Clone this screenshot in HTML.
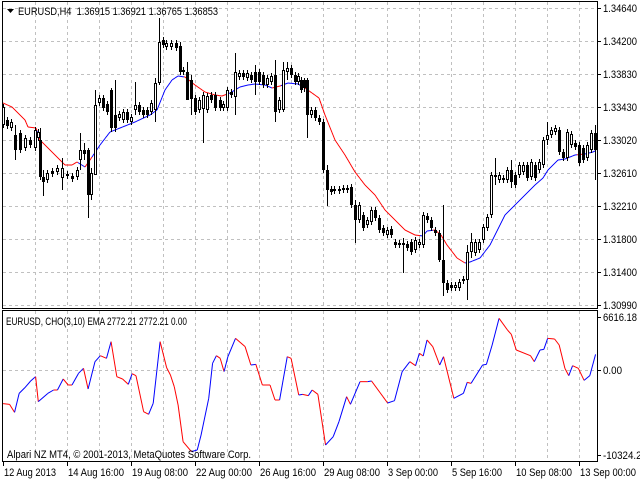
<!DOCTYPE html>
<html><head><meta charset="utf-8"><style>
html,body{margin:0;padding:0;background:#fff;width:640px;height:480px;overflow:hidden}
svg{display:block}
text{font-family:"Liberation Sans",sans-serif;font-size:11px;fill:#000}
</style></head><body>
<svg id="s" width="640" height="480" xmlns="http://www.w3.org/2000/svg">
<rect x="0" y="0" width="640" height="480" fill="#fff"/>
<g id="grid" stroke="#c0c0c0" stroke-dasharray="3,3" stroke-width="1"></g>
<g id="ma" fill="none" stroke-width="1"></g>
<g id="candles"></g>
<g id="ind" fill="none" stroke-width="1"></g>
<rect x="2.5" y="1.5" width="595" height="307" fill="none" stroke="#000"/>
<rect x="2.5" y="310.5" width="595" height="151" fill="none" stroke="#000"/>
<g id="labels"></g>
<polygon points="7,9 14,9 10.5,13" fill="#000"/>
<text x="18" y="15" textLength="200" lengthAdjust="spacingAndGlyphs">EURUSD,H4&#160;&#160;1.36915 1.36921 1.36765 1.36853</text>
<text x="6" y="325" textLength="181" lengthAdjust="spacingAndGlyphs">EURUSD, CHO(3,10) EMA 2772.21 2772.21 0.00</text>
<text x="7" y="458" textLength="244" lengthAdjust="spacingAndGlyphs">Alpari NZ MT4, © 2001-2013, MetaQuotes Software Corp.</text>
</svg>
<script>
var NS="http://www.w3.org/2000/svg";
function el(p,t,a){var e=document.createElementNS(NS,t);for(var k in a)e.setAttribute(k,a[k]);p.appendChild(e);return e;}
var grid=document.getElementById('grid');
var gx=[35,67,99,131,163,195,227,259,291,323,355,387,419,451,483,515,547,579];
gx.forEach(function(x){el(grid,'line',{x1:x+.5,y1:2,x2:x+.5,y2:308});el(grid,'line',{x1:x+.5,y1:311,x2:x+.5,y2:461});});
var gy=[8,41,74,107,140,173,206,239,272,305];
gy.forEach(function(y){el(grid,'line',{x1:3,y1:y+.5,x2:597,y2:y+.5});});
el(grid,'line',{x1:3,y1:370.5,x2:597,y2:370.5});
var lab=document.getElementById('labels');
function txt(x,y,s,w){var a={x:x,y:y};if(w){a.textLength=w;a.lengthAdjust='spacingAndGlyphs';}var t=el(lab,'text',a);t.textContent=s;}
var pl=["1.34640","1.34200","1.33830","1.33430","1.33020","1.32610","1.32210","1.31800","1.31400","1.30990"];
gy.forEach(function(y,i){el(lab,'line',{x1:597,y1:y+.5,x2:601,y2:y+.5,stroke:'#000'});txt(603,y+4,pl[i],34);});
[[317,"6616.18",34],[370,"0.00",19],[455,"-10324.27",44]].forEach(function(a){el(lab,'line',{x1:597,y1:a[0]+.5,x2:601,y2:a[0]+.5,stroke:'#000'});txt(603,a[0]+4,a[1],a[2]);});
var tl=[[3,"12 Aug 2013",52],[67,"14 Aug 16:00",56],[131,"19 Aug 08:00",56],[195,"22 Aug 00:00",56],[259,"26 Aug 16:00",56],[323,"29 Aug 08:00",56],[387,"3 Sep 00:00",50],[451,"5 Sep 16:00",50],[515,"10 Sep 08:00",56],[579,"13 Sep 00:00",56]];
tl.forEach(function(a){el(lab,'line',{x1:a[0]+.5,y1:462,x2:a[0]+.5,y2:466,stroke:'#000'});txt(a[0]+1,476,a[1],a[2]);});
var C="3,107,125,w;7,120,126,b;11,122,128,w;15,135,150,b,125,160;20,133,150,b;25,138,148,w;30,140,145,b;35,130,148,w;38,132,138,w;40,140,177,b,128,180;43,177,182,b,170,196;47,173,180,w;52,171,174,b;57,168,172,w;62,168,178,w,158,190;67,174,176,b;72,176,179,b;77,170,177,w;80,150,160,w,133,170;84,150,154,b,143,160;88,150,195,b,148,218;91,173,195,w,168,200;95,105,175,w,90,175;99,98,103,w;103,98,108,b;107,104,112,b;111,90,128,b,88,132;115,115,128,b,80,132;119,114,118,w;123,112,120,w;127,112,120,b;131,117,122,w;135,105,110,w,82,115;139,105,112,b;143,110,115,b;147,110,115,b;151,103,112,w;155,83,110,w,78,122;159,42,83,w,18,85;163,40,45,b;166,43,47,w;171,43,47,w;176,43,48,b;180,46,72,b,42,75;183,70,72,b;187,72,100,b,62,100;191,80,99,b,75,115;195,98,112,b;199,100,110,w;203,95,109,w,92,143;207,96,110,w;211,95,100,b;215,95,108,b;220,100,108,b;223,104,108,w;227,90,108,w;231,92,95,b;235,72,97,w,53,115;239,73,77,w;243,73,77,b;247,73,78,w;251,75,80,b;255,72,82,b,65,95;259,72,82,b;263,75,85,b;267,78,85,w;271,76,82,w;275,75,112,b,60,122;279,100,110,w;283,70,110,w,62,112;287,68,72,w,62,80;291,68,75,b;295,75,82,b;298,76,82,w;301,80,90,b;304,80,88,b,78,92;307,80,115,b,78,138;311,110,115,w;315,110,118,b;319,118,122,b;323,122,170,b;327,170,190,b,165,206;331,189,192,b;334,189,191,b;339,189,191,w;343,188,190,b;347,188,190,w;351,187,205,b;355,205,220,b,200,243;359,205,220,w;363,215,228,b;367,220,225,w;371,210,222,w;375,210,218,b;379,218,230,b;383,228,233,b;387,230,235,w;391,229,235,b;395,242,245,b;399,243,245,b;403,243,245,b,238,273;407,244,248,b;411,242,252,b;415,240,250,w;419,242,245,w;423,215,245,w;427,216,220,b;431,220,228,b;435,230,233,b;439,233,260,b,230,262;443,260,283,b,205,296;447,283,290,b;451,285,288,b;455,285,288,w;459,282,288,w;463,279,281,b;467,252,280,w,245,300;471,242,252,w,233,258;475,242,253,w;479,242,250,w;483,227,240,w;487,217,228,w;491,175,215,w;495,175,177,b,158,185;499,175,180,w;503,178,180,w;507,170,180,w;511,170,182,b,160,188;515,175,185,b;519,165,175,w;523,165,172,w;527,165,178,b;531,162,177,w;535,165,178,b;539,162,170,w;543,140,165,w;547,135,140,w,122,145;551,130,135,w;555,128,132,w;559,130,152,b;563,152,158,b;567,132,158,w;571,134,145,w;575,143,147,b;579,145,163,b;583,148,160,b;587,145,158,w;591,133,150,w;595,133,150,b,125,180";
var cg=document.getElementById('candles');
var closes=[];
C.split(';').forEach(function(s){var a=s.split(',');var x=+a[0],t=+a[1],b=+a[2],ty=a[3];var wt=a[4]?+a[4]:t-3,wb=a[5]?+a[5]:b+3;
if(b-t<2)b=t+2;
el(cg,'line',{x1:x+.5,y1:wt,x2:x+.5,y2:t,stroke:'#000'});
el(cg,'line',{x1:x+.5,y1:b,x2:x+.5,y2:wb,stroke:'#000'});
if(ty=='b')el(cg,'rect',{x:x-1,y:t,width:3,height:b-t,fill:'#000'});
else el(cg,'rect',{x:x-0.5,y:t+.5,width:2,height:Math.max(b-t-1,1),fill:'#fff',stroke:'#000'});
closes.push([x,ty=='b'?b:t]);});
function interp(pts,x){for(var i=0;i<pts.length-1;i++){if(x>=pts[i][0]&&x<=pts[i+1][0]){var f=(x-pts[i][0])/(pts[i+1][0]-pts[i][0]);return pts[i][1]+f*(pts[i+1][1]-pts[i][1]);}}return pts[pts.length-1][1];}
var MA=[[3,103],[12,107],[25,120],[28,127],[36,128],[40,140],[55,155],[65,165],[72,165],[77,162],[85,167],[90,160],[100,145],[110,132],[120,128],[135,122],[150,115],[157,110],[165,90],[172,80],[178,76],[185,77],[195,85],[205,92],[215,95],[222,96],[230,93],[240,87],[248,85],[255,84],[265,85],[272,88],[280,86],[288,83],[298,84],[305,88],[319,98],[325,115],[335,140],[345,155],[355,172],[365,185],[375,195],[385,210],[395,220],[405,230],[415,235],[423,236],[427,231],[435,230],[441,235],[447,245],[457,258],[465,263],[470,262],[480,258],[490,245],[495,235],[505,215],[515,205],[525,195],[535,185],[543,178],[548,170],[558,160],[565,159],[575,155],[585,154],[593,152],[597,150]];
var mg=document.getElementById('ma');
for(var x=3;x<596;x+=1){var y1=interp(MA,x),y2=interp(MA,x+1);var c=interp(closes,x+.5);var col=(c>(y1+y2)/2)?'#ff0000':'#0000ff';el(mg,'line',{x1:x,y1:y1,x2:x+1,y2:y2,stroke:col});}
var I=[[8,296],[25,298],[38,322],[50,265],[65,248],[80,228],[90,218],[93,215],[100,290],[125,265],[140,255],[150,255],[165,222],[178,240],[188,240],[205,205],[218,190],[230,252],[248,170],[262,152],[278,160],[290,110],[305,215],[320,222],[335,238],[345,206],[355,212],[375,320],[388,328],[400,295],[418,110],[435,188],[445,210],[455,245],[465,300],[478,410],[500,440],[515,435],[525,390],[545,280],[555,175],[565,152],[575,160],[585,200],[595,155],[615,100],[640,125],[655,180],[668,178],[685,240],[705,240],[718,285],[730,285],[750,155],[760,160],[780,270],[790,268],[805,272],[815,255],[830,268],[850,420],[870,395],[885,350],[905,275],[915,298],[940,230],[960,230],[970,228],[1000,275],[1012,294],[1030,287],[1050,200],[1070,170],[1085,182],[1095,145],[1105,153],[1115,105],[1130,125],[1148,180],[1158,155],[1185,280],[1210,265],[1220,232],[1230,235],[1260,180],[1270,178],[1285,120],[1303,40],[1325,75],[1335,88],[1348,135],[1385,152],[1395,170],[1410,135],[1420,133],[1430,100],[1448,102],[1460,120],[1475,190],[1485,212],[1495,182],[1510,190],[1525,226],[1540,212],[1555,148]];
var ig=document.getElementById('ind');
for(var i=0;i<I.length-1;i++){var xa=Math.max(3,I[i][0]*0.383),ya=305+I[i][1]/3,xb=I[i+1][0]*0.383,yb=305+I[i+1][1]/3;
el(ig,'line',{x1:xa,y1:ya,x2:xb,y2:yb,stroke:yb<ya?'#0000ff':'#ff0000'});}
</script>
</body></html>
